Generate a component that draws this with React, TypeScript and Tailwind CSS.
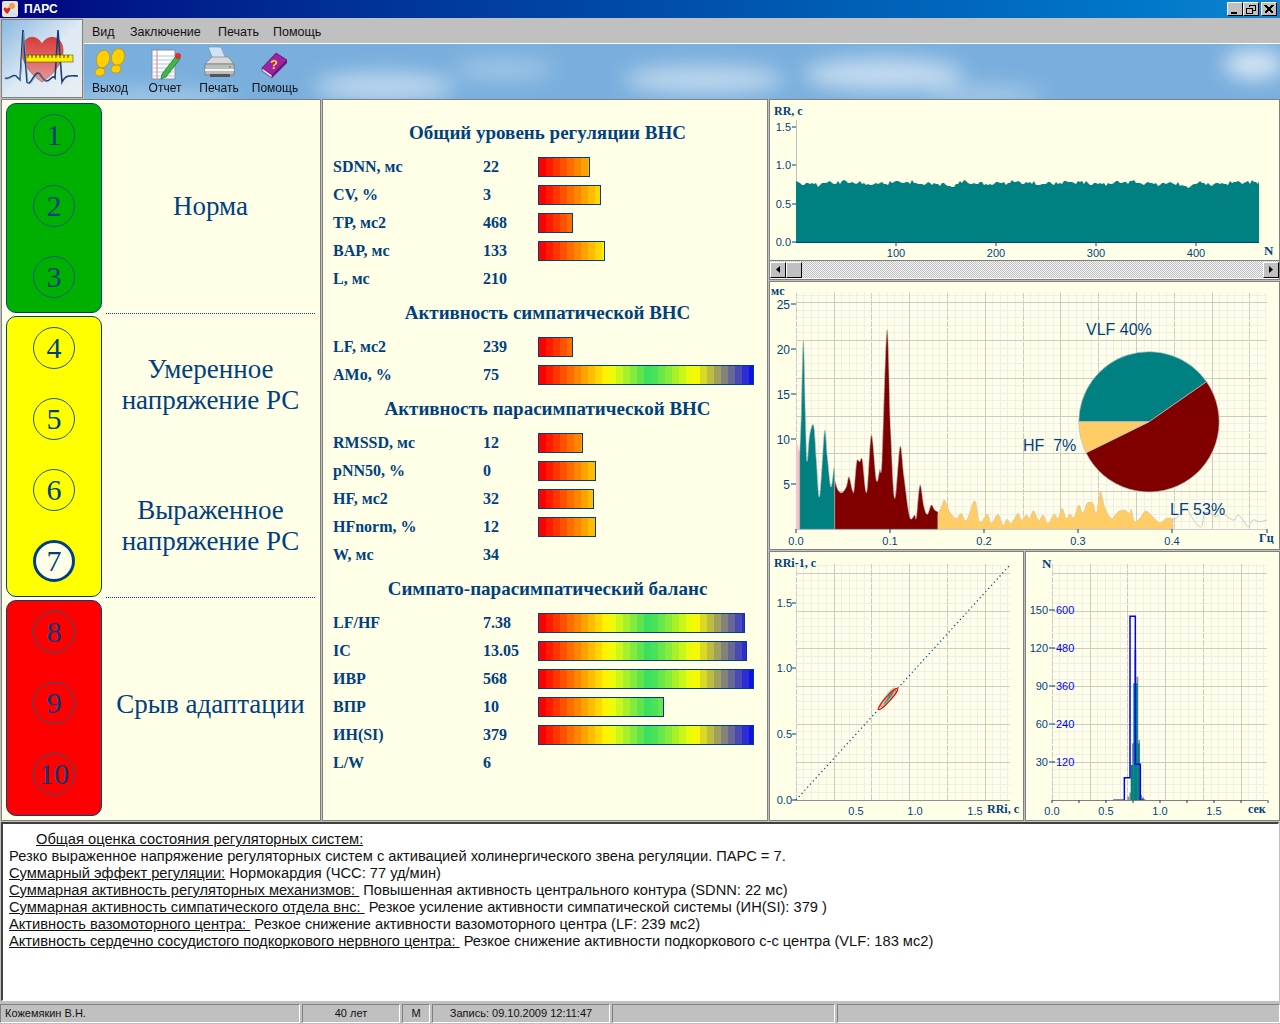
const NAVY = '#003f7f';

// colour of the rainbow bars, sampled in 7px steps like the original
const stops: [number, number[]][] = [
  [0, [255, 0, 0]],
  [0.31, [255, 255, 0]],
  [0.5, [51, 221, 102]],
  [0.71, [255, 255, 0]],
  [1, [0, 0, 255]],
];
const colorAt = (t: number) => {
  for (let i = 1; i < stops.length; i++) {
    if (t <= stops[i][0]) {
      const [a, ca] = stops[i - 1];
      const [b, cb] = stops[i];
      const k = (t - a) / (b - a);
      const c = ca.map((v, j) => Math.round(v + (cb[j] - v) * k));
      return `rgb(${c[0]},${c[1]},${c[2]})`;
    }
  }
  return 'rgb(0,0,255)';
};

const Bar = ({ width }: { width: number }) => {
  const bands = [];
  for (let x = 0; x < width - 2; x += 7) {
    bands.push(<span key={x} className="h-full w-[7px] shrink-0" style={{ background: colorAt(x / 214) }} />);
  }
  return (
    <div className="flex h-5 overflow-hidden border border-[#003f7f]" style={{ width }}>
      {bands}
    </div>
  );
};

type Row = { label: string; value: string; bar?: number };
const sections: { title: string; rows: Row[] }[] = [
  {
    title: 'Общий уровень регуляции ВНС',
    rows: [
      { label: 'SDNN, мс', value: '22', bar: 52 },
      { label: 'CV, %', value: '3', bar: 63 },
      { label: 'TP, мс2', value: '468', bar: 35 },
      { label: 'BAP, мс', value: '133', bar: 67 },
      { label: 'L, мс', value: '210' },
    ],
  },
  {
    title: 'Активность симпатической ВНС',
    rows: [
      { label: 'LF, мс2', value: '239', bar: 35 },
      { label: 'AMo, %', value: '75', bar: 216 },
    ],
  },
  {
    title: 'Активность парасимпатической ВНС',
    rows: [
      { label: 'RMSSD, мс', value: '12', bar: 45 },
      { label: 'pNN50, %', value: '0', bar: 58 },
      { label: 'HF, мс2', value: '32', bar: 56 },
      { label: 'HFnorm, %', value: '12', bar: 58 },
      { label: 'W, мс', value: '34' },
    ],
  },
  {
    title: 'Симпато-парасимпатический баланс',
    rows: [
      { label: 'LF/HF', value: '7.38', bar: 207 },
      { label: 'IC', value: '13.05', bar: 209 },
      { label: 'ИВР', value: '568', bar: 216 },
      { label: 'ВПР', value: '10', bar: 126 },
      { label: 'ИН(SI)', value: '379', bar: 216 },
      { label: 'L/W', value: '6' },
    ],
  },
];

const Circle = ({ n, active }: { n: number; active?: boolean }) => (
  <div
    className={
      active
        ? 'flex h-[42px] w-[42px] items-center justify-center rounded-full border-[3px] border-[#003f7f] bg-[#ffffe8] text-[30px] leading-none text-[#003f7f]'
        : 'flex h-[42px] w-[42px] items-center justify-center rounded-full border border-[#1f5a78] text-[30px] leading-none text-[#003f7f]'
    }
  >
    {n}
  </div>
);

const Group = ({
  color,
  nums,
  height,
  separator,
  children,
}: {
  color: string;
  nums: number[];
  height: string;
  separator?: boolean;
  children: React.ReactNode;
}) => (
  <div className={`flex ${height}`}>
    <div className={`flex w-[96px] shrink-0 flex-col items-center gap-[29px] rounded-[10px] border border-[#003f7f] pt-[10px] ${color}`}>
      {nums.map((n) => (
        <Circle key={n} n={n} active={n === 7} />
      ))}
    </div>
    <div className={separator ? 'mb-[-1px] ml-[4px] mr-[1px] flex flex-1 flex-col border-b border-dotted border-[#003f7f]' : 'ml-[4px] mr-[1px] flex flex-1 flex-col'}>
      {children}
    </div>
  </div>
);

const Label = ({ pad, children }: { pad: string; children: React.ReactNode }) => (
  <div className={`flex flex-1 items-center justify-center text-center text-[27px] leading-[31px] text-[#003f7f] ${pad}`}>
    <div>{children}</div>
  </div>
);

const gridLines = (x0: number, x1: number, y0: number, y1: number) => {
  const step = 37.8;
  const minor = step / 5;
  const out = [];
  for (let i = 0, x = x0; x <= x1; x = x0 + ++i * minor) {
    if (i % 5) out.push(<line key={`a${i}`} x1={x} x2={x} y1={y1} y2={y0} stroke="#eeeeee" />);
  }
  for (let i = 0, y = y1; y >= y0; y = y1 - ++i * minor) {
    if (i % 5) out.push(<line key={`b${i}`} x1={x0} x2={x1} y1={y} y2={y} stroke="#eeeeee" />);
  }
  for (let i = 0, x = x0; x <= x1; x = x0 + ++i * step) {
    out.push(<line key={`c${i}`} x1={x} x2={x} y1={y1} y2={y0} stroke="#cbcbcb" strokeDasharray={i % 2 ? undefined : '6 1'} />);
  }
  for (let i = 0, y = y1; y >= y0; y = y1 - ++i * step) {
    out.push(<line key={`d${i}`} x1={x0} x2={x1} y1={y} y2={y} stroke="#cbcbcb" />);
  }
  return <g shapeRendering="crispEdges">{out}</g>;
};

const chartText = "font-['Liberation_Sans',sans-serif] text-[11px] fill-[#003f7f]";
const chartBold = "font-['Liberation_Serif',serif] text-[12px] font-bold fill-[#003f7f]";

// top edge of the RR rhythm
const rrPath = () => {
  let d = 'M796 242 L796 181';
  for (let x = 798; x <= 1258; x += 2) {
    const noise =
      Math.sin(x * 0.37) * 0.9 + Math.sin(x * 0.83 + 1) * 0.9 + Math.sin(x * 0.11) * 1 + Math.round(Math.sin(x * 1.7) * 0.6);
    const dip = 5 * Math.exp(-((x - 951) ** 2) / 30) + 6 * Math.exp(-((x - 1186) ** 2) / 40);
    const y = Math.round(183 + noise + dip);
    d += ` L${x} ${y}`;
  }
  return d + ' L1259 181 L1259 242 Z';
};

const RRChart = () => (
  <svg viewBox="770 100 508 160" className="block h-[160px] w-[508px]">
    <text x={774} y={115} className={chartBold}>RR, с</text>
    <line x1={796} x2={796} y1={120} y2={242} stroke="#c0c0c0" shapeRendering="crispEdges" />
    <path d={rrPath()} fill="#008080" />
    <line x1={796} x2={1259} y1={242.5} y2={242.5} stroke={NAVY} />
    {[
      ['1.5', 127],
      ['1.0', 165],
      ['0.5', 204],
      ['0.0', 242],
    ].map(([t, y]) => (
      <g key={t}>
        <text x={791} y={Number(y) + 4} textAnchor="end" className={chartText}>{t}</text>
        <line x1={792} x2={796} y1={y} y2={y} stroke={NAVY} />
      </g>
    ))}
    {[100, 200, 300, 400].map((n, i) => (
      <g key={n}>
        <line x1={896 + i * 100} x2={896 + i * 100} y1={243} y2={246} stroke={NAVY} />
        <text x={896 + i * 100} y={257} textAnchor="middle" className={chartText}>{n}</text>
      </g>
    ))}
    <text x={1264} y={255} className="font-['Liberation_Serif',serif] text-[13px] font-bold fill-[#003f7f]">N</text>
  </svg>
);

const toAbs = (list: number[][]) => list.map(([x, y]) => [768 + x / 3, 280 + y / 3]);

// rounded curve through the sampled spectrum; first and last points stay as corners
const smooth = (list: number[][], closed: boolean) => {
  const p = toAbs(list);
  const start = closed ? 1 : 0;
  const end = closed ? p.length - 2 : p.length - 1;
  let d = closed ? `M${p[0][0]} ${p[0][1]} L${p[1][0]} ${p[1][1]}` : `M${p[0][0]} ${p[0][1]}`;
  for (let i = start; i < end; i++) {
    const a = p[Math.max(i - 1, start)];
    const b = p[i];
    const c = p[i + 1];
    const e = p[Math.min(i + 2, end)];
    const c1 = [b[0] + (c[0] - a[0]) / 6, b[1] + (c[1] - a[1]) / 6];
    const c2 = [c[0] - (e[0] - b[0]) / 6, c[1] - (e[1] - b[1]) / 6];
    d += ` C${c1[0]} ${c1[1]} ${c2[0]} ${c2[1]} ${c[0]} ${c[1]}`;
  }
  return closed ? `${d} L${p[p.length - 1][0]} ${p[p.length - 1][1]} Z` : d;
};

const pink = [[85, 748], [85, 480], [95, 520], [95, 748]];
const teal = [[95, 748], [95, 525], [100, 400], [106, 182], [112, 400], [117, 543], [125, 465], [137, 437], [145, 540], [153, 650], [160, 590], [170, 452], [178, 530], [187, 615], [192, 610], [198, 565], [200, 580], [200, 748]];
const maroon = [[200, 748], [200, 600], [210, 630], [222, 638], [235, 620], [243, 590], [253, 630], [258, 630], [266, 545], [275, 545], [283, 540], [296, 637], [310, 465], [325, 600], [335, 570], [342, 540], [357, 150], [368, 450], [380, 655], [396, 500], [408, 590], [425, 710], [440, 705], [445, 712], [456, 615], [468, 680], [478, 703], [490, 675], [500, 690], [510, 695], [510, 748]];
const orange = [[510, 748], [510, 705], [520, 680], [530, 660], [545, 695], [565, 715], [580, 700], [595, 722], [620, 662], [635, 725], [658, 703], [670, 730], [690, 703], [705, 735], [717, 718], [730, 730], [750, 700], [760, 720], [775, 705], [785, 715], [797, 692], [812, 722], [825, 705], [840, 730], [858, 702], [870, 715], [882, 685], [895, 715], [905, 702], [918, 712], [932, 675], [945, 700], [957, 670], [975, 670], [985, 700], [997, 635], [1010, 680], [1030, 715], [1050, 695], [1070, 690], [1085, 700], [1090, 688], [1100, 725], [1115, 715], [1133, 693], [1150, 705], [1175, 728], [1195, 715], [1215, 715], [1215, 748]];
const tail = [[1215, 720], [1230, 710], [1250, 685], [1265, 700], [1280, 725], [1300, 740], [1310, 700], [1330, 702], [1345, 710], [1360, 700], [1385, 715], [1400, 720], [1410, 705], [1425, 720], [1440, 740], [1455, 720], [1475, 725], [1497, 720]];

const SpectrumChart = () => (
  <svg viewBox="770 282 508 265" className="block h-[265px] w-[508px]">
    {gridLines(796.3, 1267, 292, 529.5)}
    <text x={771} y={295} className={chartBold}>мс</text>
    {[
      ['25', 304],
      ['20', 349],
      ['15', 394],
      ['10', 439],
      ['5', 484],
    ].map(([t, y]) => (
      <g key={t}>
        <text x={790} y={Number(y) + 5} textAnchor="end" className="font-['Liberation_Sans',sans-serif] text-[12px] fill-[#003f7f]">{t}</text>
        <line x1={791} x2={796} y1={y} y2={y} stroke={NAVY} />
      </g>
    ))}
    <path d={smooth(pink, true)} fill="#ffc0cb" />
    <path d={smooth(teal, true)} fill="#008080" stroke="#b8b8b8" strokeWidth={0.6} />
    <path d={smooth(maroon, true)} fill="#800000" stroke="#b8b8b8" strokeWidth={0.6} />
    <path d={smooth(orange, true)} fill="#ffcc66" stroke="#c8c8c8" strokeWidth={0.6} />
    <path d={smooth(tail, false)} fill="none" stroke="#c8c8c8" />
    {['0.0', '0.1', '0.2', '0.3', '0.4'].map((t, i) => (
      <g key={t}>
        <line x1={796 + i * 94} x2={796 + i * 94} y1={529} y2={533} stroke={NAVY} />
        <text x={796 + i * 94} y={545} textAnchor="middle" className={chartText}>{t}</text>
      </g>
    ))}
    <line x1={1267} x2={1267} y1={529} y2={533} stroke={NAVY} />
    <text x={1259} y={542} className={chartBold}>Гц</text>
    {/* pie */}
    <path d="M1149 421.8 L1078.8 421.8 A70.2 70.2 0 0 1 1206.6 381.7 Z" fill="#008080" stroke="#c0c0c0" strokeWidth={0.7} />
    <path d="M1149 421.8 L1206.6 381.7 A70.2 70.2 0 1 1 1086 452.8 Z" fill="#800000" stroke="#c0c0c0" strokeWidth={0.7} />
    <path d="M1149 421.8 L1086 452.8 A70.2 70.2 0 0 1 1078.8 421.8 Z" fill="#ffcc66" stroke="#c0c0c0" strokeWidth={0.7} />
    <text x={1086} y={335} className="font-['Liberation_Sans',sans-serif] text-[16px] fill-[#003f7f]">VLF 40%</text>
    <text x={1023} y={451} className="font-['Liberation_Sans',sans-serif] text-[16px] fill-[#003f7f]">HF&#160;&#160;7%</text>
    <text x={1170} y={515} className="font-['Liberation_Sans',sans-serif] text-[16px] fill-[#003f7f]">LF 53%</text>
  </svg>
);

const ScatterChart = () => (
  <svg viewBox="770 552 252 267" className="block h-[267px] w-[252px]">
    {gridLines(796.3, 1010, 564, 800)}
    <text x={774} y={567} className={chartBold}>RRi-1, с</text>
    {[
      ['1.5', 603],
      ['1.0', 668],
      ['0.5', 734],
      ['0.0', 800],
    ].map(([t, y]) => (
      <g key={t}>
        <text x={792} y={Number(y) + 4} textAnchor="end" className={chartText}>{t}</text>
        <line x1={792} x2={796} y1={y} y2={y} stroke={NAVY} />
      </g>
    ))}
    <line x1={796} x2={1010} y1={800.5} y2={800.5} stroke="#909090" />
    {[
      ['0.5', 856],
      ['1.0', 915],
      ['1.5', 975],
    ].map(([t, x]) => (
      <text key={t} x={x} y={815} textAnchor="middle" className={chartText}>{t}</text>
    ))}
    <line x1={796} y1={800} x2={1010} y2={565} stroke={NAVY} strokeWidth={1.2} strokeDasharray="1.2 3" />
    <polygon points="880,706 884,697 890,690 894,687 896,693 890,700 884,707" fill="#b9d7a6" />
    <polygon points="883,705 889,695 895,689 892,696 886,703" fill="#3f9a90" />
    <ellipse cx={888} cy={699} rx={14} ry={2.5} transform="rotate(-48 888 699)" fill="none" stroke="#ff0000" strokeWidth={1.2} />
    <text x={987} y={813} className={chartBold}>RRi, с</text>
  </svg>
);

const hx = (x: number) => 1040 + x / 3;
const hy = (y: number) => 600 + y / 3;

const HistChart = () => (
  <svg viewBox="1026 552 252 267" className="block h-[267px] w-[252px]">
    {gridLines(1052.3, 1267, 564, 800)}
    <text x={1042} y={568} className="font-['Liberation_Serif',serif] text-[13px] font-bold fill-[#003f7f]">N</text>
    {[
      ['150', '600', 610],
      ['120', '480', 648],
      ['90', '360', 686],
      ['60', '240', 724],
      ['30', '120', 762],
    ].map(([a, b, y]) => (
      <g key={a}>
        <text x={1048} y={Number(y) + 4} textAnchor="end" className={chartText}>{a}</text>
        <line x1={1049} x2={1055} y1={y} y2={y} stroke={NAVY} />
        <text x={1056} y={Number(y) + 4} className="font-['Liberation_Sans',sans-serif] text-[11px] fill-[#0000ff]">{b}</text>
      </g>
    ))}
    {[
      [262, 268, 590, '#909090'],
      [268, 276, 578, '#909090'],
      [276, 283, 430, '#909090'],
      [283, 289, 150, '#909090'],
      [289, 295, 230, '#909090'],
      [295, 300, 420, '#909090'],
      [300, 306, 585, '#909090'],
      [306, 312, 592, '#909090'],
      [272, 280, 495, '#008080'],
      [280, 293, 250, '#008080'],
      [293, 299, 430, '#008080'],
      [299, 303, 580, '#008080'],
    ].map(([a, b, t, c], i) => (
      <rect key={i} x={hx(Number(a))} width={(Number(b) - Number(a)) / 3} y={hy(Number(t))} height={(601 - Number(t)) / 3} fill={String(c)} />
    ))}
    <polyline
      points={[[220, 601], [253, 601], [253, 533], [270, 533], [270, 49], [286, 49], [286, 493], [301, 493], [301, 601], [316, 601]].map(([x, y]) => `${hx(x)},${hy(y)}`).join(' ')}
      fill="none"
      stroke="#0000ff"
      strokeWidth={1.5}
    />
    <line x1={1052} x2={1267} y1={800.5} y2={800.5} stroke="#808080" shapeRendering="crispEdges" />
    {[0, 1, 2, 3, 4, 5, 6, 7, 8].map((i) => (
      <line key={i} x1={1052 + i * 27} x2={1052 + i * 27} y1={800} y2={803} stroke={NAVY} />
    ))}
    {[
      ['0.0', 1052],
      ['0.5', 1106],
      ['1.0', 1160],
      ['1.5', 1214],
    ].map(([t, x]) => (
      <text key={t} x={x} y={815} textAnchor="middle" className={chartText}>{t}</text>
    ))}
    <text x={1248} y={813} className={chartBold}>сек</text>
  </svg>
);

const WinButton = ({ children }: { children: React.ReactNode }) => (
  <div className="flex h-[14px] w-[16px] items-center justify-center border-t border-l border-t-white border-l-white border-r border-b border-r-black border-b-black bg-[#c0c0c0]">
    <svg viewBox="0 0 10 9" className="h-[9px] w-[10px]" shapeRendering="crispEdges" fill="none" stroke="#000">
      {children}
    </svg>
  </div>
);

const Arrow = ({ left }: { left?: boolean }) => (
  <div className="flex h-[16px] w-[16px] shrink-0 items-center justify-center border-t border-l border-t-white border-l-white border-r border-b border-r-black border-b-black bg-[#c0c0c0]">
    <svg viewBox="0 0 4 7" className="h-[7px] w-[4px]">
      <path d={left ? 'M4 0 L0 3.5 L4 7 Z' : 'M0 0 L4 3.5 L0 7 Z'} fill="#000" />
    </svg>
  </div>
);

const Sky = () => (
  <svg className="absolute inset-0 h-full w-full" viewBox="0 0 1196 54" preserveAspectRatio="none">
    <defs>
      <filter id="cloudBlur" x="-50%" y="-100%" width="200%" height="300%">
        <feGaussianBlur stdDeviation="10" />
      </filter>
    </defs>
    <rect width="1196" height="54" fill="#7aafdd" />
    <g fill="#ffffff" filter="url(#cloudBlur)">
      <ellipse cx={70} cy={55} rx={80} ry={10} opacity={0.35} />
      <ellipse cx={300} cy={42} rx={70} ry={14} opacity={0.5} />
      <ellipse cx={420} cy={25} rx={50} ry={10} opacity={0.3} />
      <ellipse cx={620} cy={35} rx={80} ry={14} opacity={0.5} />
      <ellipse cx={800} cy={30} rx={80} ry={16} opacity={0.55} />
      <ellipse cx={900} cy={50} rx={60} ry={8} opacity={0.4} />
      <ellipse cx={1170} cy={20} rx={30} ry={14} opacity={0.7} />
    </g>
  </svg>
);

const ToolItem = ({ width, label, children }: { width: string; label: string; children: React.ReactNode }) => (
  <div className={`flex flex-col items-center ${width}`}>
    <div className="h-[37px] w-[40px]">{children}</div>
    <div className="text-[12px] leading-[14px] text-[#111]">{label}</div>
  </div>
);

const ExitIcon = () => (
  <svg viewBox="0 0 40 37" className="h-full w-full">
    <g fill="#ffd000" stroke="#b58a00" strokeWidth={0.6}>
      <ellipse cx={13} cy={15} rx={6.5} ry={9} transform="rotate(15 13 15)" />
      <ellipse cx={10} cy={28} rx={5} ry={4} transform="rotate(-10 10 28)" />
      <ellipse cx={28} cy={13} rx={6.5} ry={8.5} transform="rotate(15 28 13)" />
      <ellipse cx={26} cy={25} rx={5} ry={4} transform="rotate(-10 26 25)" />
    </g>
  </svg>
);

const ReportIcon = () => (
  <svg viewBox="0 0 40 37" className="h-full w-full">
    <rect x={7} y={6} width={23} height={29} fill="#fff" stroke="#7f8fa8" />
    {[12, 16, 20, 24, 28, 32].map((y) => (
      <line key={y} x1={8} x2={29} y1={y} y2={y} stroke="#a9c4e6" />
    ))}
    <line x1={12} x2={12} y1={6} y2={35} stroke="#e08080" />
    <path d="M17 30 L31 12 L35 15 L21 33 L16 35 Z" fill="#43b548" stroke="#1f6e26" strokeWidth={0.7} />
    <circle cx={33} cy={12} r={3} fill="#e03030" />
  </svg>
);

const PrintIcon = () => (
  <svg viewBox="0 0 40 37" className="h-full w-full">
    <path d="M9 3 L22 3 L27 15 L14 15 Z" fill="#cfe3f5" stroke="#7f8fa8" strokeWidth={0.7} />
    <path d="M6 20 L13 13 L29 13 L35 20 Z" fill="#d8d8d8" stroke="#777" strokeWidth={0.6} />
    <path d="M6 20 L35 20 L35 31 L6 31 Z" fill="#bdbdbd" stroke="#666" strokeWidth={0.6} />
    <path d="M6 26 L35 26" stroke="#f4f4f4" strokeWidth={2} />
    <rect x={11} y={30} width={20} height={3} fill="#555" />
    <circle cx={31} cy={23} r={1} fill="#3bb54a" />
  </svg>
);

const HelpIcon = () => (
  <svg viewBox="0 0 40 37" className="h-full w-full">
    <path d="M7 24 L21 9 L32 16 L17 31 Z" fill="#a020a8" stroke="#4a0a50" strokeWidth={0.7} />
    <path d="M7 24 L17 31 L17 34 L7 27 Z" fill="#f0d8f0" stroke="#4a0a50" strokeWidth={0.6} />
    <path d="M17 31 L32 16 L32 19 L17 34 Z" fill="#701078" />
    <text x={15} y={25} className="font-['Liberation_Sans',sans-serif] text-[13px] font-bold fill-[#ffe000]">?</text>
  </svg>
);

const Logo = () => (
  <svg viewBox="0 0 80 77" className="h-full w-full">
    <defs>
      <linearGradient id="logoSky" x1="0" x2="1" y1="0" y2="1">
        <stop offset="0" stopColor="#8ab8e0" />
        <stop offset="0.5" stopColor="#dde9f4" />
        <stop offset="1" stopColor="#e9eef3" />
      </linearGradient>
      <linearGradient id="logoHeart" x1="0" x2="0" y1="0" y2="1">
        <stop offset="0" stopColor="#d93a3a" />
        <stop offset="1" stopColor="#e69a9a" />
      </linearGradient>
    </defs>
    <rect width="80" height="77" fill="url(#logoSky)" />
    <path d="M40 62 C28 54 19 42 20 29 C21 16 34 13 40 24 C46 13 60 16 61 29 C62 42 52 54 40 62 Z" fill="url(#logoHeart)" stroke="#9c2b2b" strokeWidth={0.5} />
    <path d="M3 58 C8 60 12 52 15 57 L18 60 L21 10 L25 62 C28 66 30 58 34 54 C38 50 40 60 44 61 C48 62 50 54 53 58 L56 10 L60 62 C64 54 70 56 76 56" fill="none" stroke="#16406e" strokeWidth={1.6} />
    <path d="M3 59 C8 61 12 53 15 58 L18 61 L22 12 L26 63 C29 67 31 59 35 55 C39 51 41 61 45 62" fill="none" stroke="#8aa8c8" strokeWidth={0.7} />
    <rect x={24} y={35} width={47} height={7} fill="#ffee00" stroke="#333" strokeWidth={0.5} />
    <path d="M26 35v3M30 35v3M34 35v3M38 35v3M42 35v3M46 35v3M50 35v3M54 35v3M58 35v3M62 35v3M66 35v3" stroke="#111" strokeWidth={0.8} />
  </svg>
);

const sunken = 'border-t border-l border-t-[#808080] border-l-[#808080] border-r border-b border-r-white border-b-white';

export default function App() {
  return (
    <div className="flex h-[1024px] w-[1280px] flex-col overflow-hidden bg-[#c0c0c0] font-['Liberation_Sans',sans-serif]">
      {/* title bar */}
      <div className="flex h-[18px] shrink-0 items-center justify-between bg-gradient-to-r from-[#000080] to-[#1084d0] pl-[2px] pr-[3px]">
        <div className="flex items-center gap-[6px]">
          <svg viewBox="0 0 16 16" className="h-4 w-4">
            <rect width="16" height="16" rx="2" fill="#e9e4d8" />
            <circle cx="10" cy="5" r="3" fill="#e8a060" />
            <path d="M6 15 C6 9 14 9 15 15 Z" fill="#cfe0f2" />
            <path d="M5 13 C2 10 1 8 2 7 C3 6 4.5 6.5 5 8 C5.5 6.5 7 6 8 7 C9 8 8 10 5 13 Z" fill="#e02020" />
          </svg>
          <span className="text-[12px] font-bold text-white">ПАРС</span>
        </div>
        <div className="flex">
          <WinButton>
            <path d="M1 8 H7" strokeWidth={2} />
          </WinButton>
          <WinButton>
            <path d="M3 2 V0.5 H9.5 V5 H7 M0.5 3 H6.5 V8.5 H0.5 Z" />
          </WinButton>
          <div className="ml-[2px]">
            <WinButton>
              <path d="M1 0 L9 8 M9 0 L1 8" strokeWidth={1.5} />
            </WinButton>
          </div>
        </div>
      </div>

      {/* menu and toolbar */}
      <div className="flex h-[81px] shrink-0 pt-[1px]">
        <div className="ml-[1px] h-[79px] w-[82px] shrink-0 border border-[#808080]">
          <Logo />
        </div>
        <div className="ml-[1px] flex flex-1 flex-col">
          <div className="flex h-[25px] items-center border-b border-white bg-[#c0c0c0] pl-[8px] pt-[3px] text-[12.5px] text-[#111]">
            <span className="w-[38px]">Вид</span>
            <span className="w-[88px]">Заключение</span>
            <span className="w-[55px]">Печать</span>
            <span>Помощь</span>
          </div>
          <div className="relative flex flex-1">
            <Sky />
            <div className="relative flex">
              <ToolItem width="w-[52px]" label="Выход"><ExitIcon /></ToolItem>
              <ToolItem width="w-[58px]" label="Отчет"><ReportIcon /></ToolItem>
              <ToolItem width="w-[50px]" label="Печать"><PrintIcon /></ToolItem>
              <ToolItem width="w-[62px]" label="Помощь"><HelpIcon /></ToolItem>
            </div>
          </div>
        </div>
      </div>

      {/* main area */}
      <div className="flex h-[722px] shrink-0 gap-[1px] pl-[1px] text-[#003f7f]">
        <div className="flex w-[320px] shrink-0 flex-col gap-[3px] border border-[#808080] bg-[#ffffe8] px-[4px] pt-[3px] font-['Liberation_Serif',serif]">
          <Group color="bg-[#00b000]" nums={[1, 2, 3]} height="h-[210px]" separator>
            <Label pad="pb-[4px]">Норма</Label>
          </Group>
          <Group color="bg-[#ffff00]" nums={[4, 5, 6, 7]} height="h-[281px]" separator>
            <Label pad="pb-[2px]">Умеренное<br />напряжение РС</Label>
            <Label pad="pb-[2px]">Выраженное<br />напряжение РС</Label>
          </Group>
          <Group color="bg-[#ff0000]" nums={[8, 9, 10]} height="h-[216px]">
            <Label pad="pb-[8px]"><span className="whitespace-nowrap">Срыв адаптации</span></Label>
          </Group>
        </div>

        <div className="w-[446px] shrink-0 border border-[#808080] bg-[#ffffe8] pl-[10px] pt-[13px] font-['Liberation_Serif',serif] text-[#003f7f]">
          {sections.map((s) => (
            <div key={s.title}>
              <h2 className="flex h-[40px] items-center justify-center pr-[5px] pt-[1px] text-[19px] font-bold">{s.title}</h2>
              {s.rows.map((r) => (
                <div key={r.label} className="flex h-[28px] items-center text-[16px] font-bold">
                  <span className="w-[150px]">{r.label}</span>
                  <span className="w-[55px]">{r.value}</span>
                  {r.bar ? <Bar width={r.bar} /> : null}
                </div>
              ))}
            </div>
          ))}
        </div>

        <div className="flex flex-1 flex-col gap-[1px]">
          <div className="h-[181px] shrink-0 border border-[#808080] bg-[#ffffe8]">
            <RRChart />
            <div className="flex h-[18px] items-center border-t border-[#808080] bg-[repeating-conic-gradient(#c0c0c0_0_25%,#f4f4f4_0_50%)] bg-[length:2px_2px]">
              <Arrow left />
              <div className="h-[16px] w-[16px] shrink-0 border-t border-l border-t-white border-l-white border-r border-b border-r-black border-b-black bg-[#c0c0c0]" />
              <div className="flex-1" />
              <Arrow />
            </div>
          </div>
          <div className="h-[269px] shrink-0 border border-[#808080] bg-[#ffffe8]">
            <SpectrumChart />
          </div>
          <div className="flex h-[270px] shrink-0 gap-[1px]">
            <div className="w-[255px] shrink-0 border border-[#808080] bg-[#ffffe8]">
              <ScatterChart />
            </div>
            <div className="flex-1 border border-[#808080] bg-[#ffffe8]">
              <HistChart />
            </div>
          </div>
        </div>
      </div>

      {/* conclusion text */}
      <div className="mx-[1px] mt-[1px] h-[179px] shrink-0 overflow-hidden border-t-2 border-l-2 border-b border-r border-t-[#404040] border-l-[#404040] border-b-white border-r-white bg-white px-[6px] pt-[7px] text-[14.67px] leading-[17px] text-[#111]">
        <div className="pl-[27px]"><span className="underline">Общая оценка состояния регуляторных систем:</span></div>
        <div>Резко выраженное напряжение регуляторных систем с активацией холинергического звена регуляции. ПАРС = 7.</div>
        <div><span className="underline">Суммарный эффект регуляции:</span> Нормокардия (ЧСС: 77 уд/мин)</div>
        <div><span className="underline">Суммарная активность регуляторных механизмов:&nbsp;</span>&nbsp;Повышенная активность центрального контура (SDNN: 22 мс)</div>
        <div><span className="underline">Суммарная активность симпатического отдела внс:&nbsp;</span>&nbsp;Резкое усиление активности симпатической системы (ИН(SI): 379 )</div>
        <div><span className="underline">Активность вазомоторного центра:&nbsp;</span>&nbsp;Резкое снижение активности вазомоторного центра (LF: 239 мс2)</div>
        <div><span className="underline">Активность сердечно сосудистого подкоркового нервного центра:&nbsp;</span>&nbsp;Резкое снижение активности подкоркового с-с центра (VLF: 183 мс2)</div>
      </div>

      {/* status bar */}
      <div className="mt-[3px] flex h-[19px] shrink-0 gap-[2px] text-[11px] text-[#111]">
        <div className={`flex w-[300px] items-center pl-[4px] ${sunken}`}>Кожемякин В.Н.</div>
        <div className={`flex w-[98px] items-center justify-center ${sunken}`}>40 лет</div>
        <div className={`flex w-[28px] items-center justify-center ${sunken}`}>М</div>
        <div className={`flex w-[178px] items-center justify-center ${sunken}`}>Запись: 09.10.2009 12:11:47</div>
        <div className={`w-[223px] ${sunken}`} />
        <div className={`flex-1 ${sunken}`} />
      </div>
    </div>
  );
}
